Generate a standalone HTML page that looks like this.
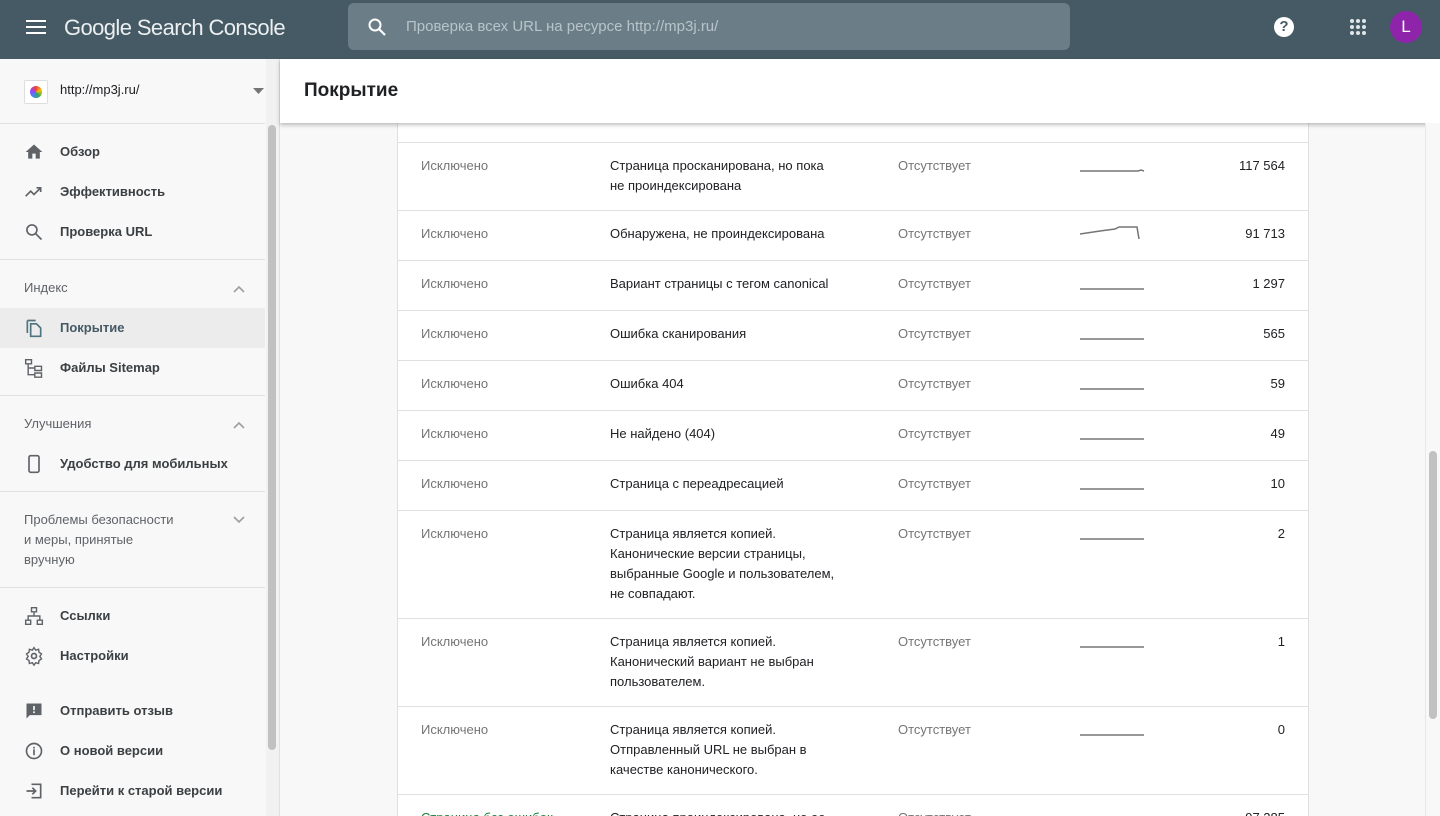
<!DOCTYPE html>
<html style="overflow:hidden;height:816px"><head><meta charset="utf-8"><style>
*{box-sizing:border-box;margin:0;padding:0}
body{width:1440px;height:816px;overflow:hidden;font-family:"Liberation Sans",Arial,sans-serif;background:#f8f8f8;position:relative;color:#202124}
.hdr{position:absolute;left:0;top:0;width:1440px;height:59px;background:#455a64}
.abs{position:absolute}
.side{position:absolute;left:0;top:59px;width:280px;height:757px;background:#f8f8f8;border-right:1px solid #e0e0e0;overflow:hidden}
.item{position:absolute;left:0;width:265px;height:40px;font-size:13px;font-weight:bold;color:#3c4043;line-height:40px;padding-left:60px}
.item svg{position:absolute;left:24px;top:10px}
.sec{position:absolute;left:24px;font-size:13px;color:#5f6368;line-height:20px}
.hr{position:absolute;left:0;width:265px;height:1px;background:#e0e0e0}
.card{position:absolute;left:397px;top:100px;width:912px;height:716px;overflow:hidden;background:#fff;border-left:1px solid #e0e0e0;border-right:1px solid #e0e0e0}
.row{position:absolute;left:0;width:911px;border-top:1px solid #e0e0e0;font-size:13px;line-height:20px}
.c1{position:absolute;left:23px;top:13px;color:#757575}
.c2{position:absolute;left:212px;top:13px;width:228px;color:#202124}
.c3{position:absolute;left:500px;top:13px;color:#757575}
.c4{position:absolute;right:24px;top:13px;color:#202124}
.sp{position:absolute;left:680px;top:0}
</style></head><body>
<div class="hdr">
 <svg class="abs" style="left:26px;top:19px" width="20" height="16"><rect x="0" y="1" width="20" height="2" fill="#fff"/><rect x="0" y="7" width="20" height="2" fill="#fff"/><rect x="0" y="13" width="20" height="2" fill="#fff"/></svg>
 <div class="abs" style="left:64px;top:13px;font-size:22px;color:#eceff1;letter-spacing:-0.6px;line-height:30px">Google Search Console</div>
 <div class="abs" style="left:348px;top:3px;width:722px;height:47px;background:#6b7e87;border-radius:6px">
  <svg class="abs" style="left:19px;top:14px" width="20" height="20" viewBox="0 0 20 20"><circle cx="8" cy="8" r="5.5" fill="none" stroke="#fff" stroke-width="2"/><path d="M12 12l6 6" stroke="#fff" stroke-width="2.2"/></svg>
  <div class="abs" style="left:58px;top:14px;font-size:15px;color:#b8c4c9;line-height:20px">Проверка всех URL на ресурсе http://mp3j.ru/</div>
 </div>
 <div class="abs" style="left:1274px;top:17px;width:20px;height:20px;border-radius:50%;background:#fff;color:#455a64;font-weight:bold;font-size:15px;text-align:center;line-height:20px">?</div>
 <svg class="abs" style="left:1350px;top:19px" width="16" height="16"><g fill="#e0e6e9"><circle cx="2" cy="2" r="2"/><circle cx="8" cy="2" r="2"/><circle cx="14" cy="2" r="2"/><circle cx="2" cy="8" r="2"/><circle cx="8" cy="8" r="2"/><circle cx="14" cy="8" r="2"/><circle cx="2" cy="14" r="2"/><circle cx="8" cy="14" r="2"/><circle cx="14" cy="14" r="2"/></g></svg>
 <div class="abs" style="left:1390px;top:11px;width:32px;height:32px;border-radius:50%;background:#8e24aa;color:#fff;font-size:17px;text-align:center;line-height:32px">L</div>
</div>

<div class="side">
 <div class="abs" style="left:24px;top:21px;width:24px;height:24px;border:1px solid #ddd;background:#fff;border-radius:2px"><div style="margin:5px;width:12px;height:12px;border-radius:50%;background:conic-gradient(#ea4335,#fbbc05,#34a853,#4285f4,#a142f4,#ea4335)"></div></div>
 <div class="abs" style="left:60px;top:21px;font-size:13px;line-height:20px">http://mp3j.ru/</div>
 <svg class="abs" style="left:253px;top:29px" width="11" height="6"><path d="M0 0h11L5.5 6z" fill="#757575"/></svg>
 <div class="hr" style="top:64px"></div>
 <div class="item" style="top:73px"><svg width="20" height="20" viewBox="0 0 24 24"><path d="M10 20v-6h4v6h5v-8h3L12 3 2 12h3v8z" fill="#5f6368"/></svg>Обзор</div>
 <div class="item" style="top:113px"><svg width="20" height="20" viewBox="0 0 24 24"><path d="M2 17l6-6 4 4 8-8M15 7h5v5" fill="none" stroke="#5f6368" stroke-width="2"/></svg>Эффективность</div>
 <div class="item" style="top:153px"><svg width="20" height="20" viewBox="0 0 24 24"><circle cx="9.5" cy="9.5" r="6" fill="none" stroke="#5f6368" stroke-width="2"/><path d="M14 14l7 7" stroke="#5f6368" stroke-width="2"/></svg>Проверка URL</div>
 <div class="hr" style="top:200px"></div>
 <div class="sec" style="top:219px">Индекс</div>
 <svg class="abs" style="left:233px;top:226px" width="12" height="8"><path d="M1 7l5-5 5 5" fill="none" stroke="#9e9e9e" stroke-width="1.6"/></svg>
 <div class="item" style="top:249px;background:#ececec;color:#455a64"><svg width="20" height="20" viewBox="0 0 24 24"><path d="M4 3v15M4 3h10M8 7h7l5 5v10H8z" fill="none" stroke="#4f7380" stroke-width="2"/></svg>Покрытие</div>
 <div class="item" style="top:289px"><svg width="20" height="20" viewBox="0 0 24 24"><path d="M2 2h7v5H2zM13 10h8v5h-8zM13 18h8v5h-8zM5 7v13h8M5 12h8" fill="none" stroke="#5f6368" stroke-width="1.7"/></svg>Файлы Sitemap</div>
 <div class="hr" style="top:336px"></div>
 <div class="sec" style="top:355px">Улучшения</div>
 <svg class="abs" style="left:233px;top:362px" width="12" height="8"><path d="M1 7l5-5 5 5" fill="none" stroke="#9e9e9e" stroke-width="1.6"/></svg>
 <div class="item" style="top:385px"><svg width="20" height="20" viewBox="0 0 24 24"><rect x="6" y="2" width="12" height="20" rx="2" fill="none" stroke="#5f6368" stroke-width="2"/></svg>Удобство для мобильных</div>
 <div class="hr" style="top:432px"></div>
 <div class="sec" style="top:451px">Проблемы безопасности<br>и меры, принятые<br>вручную</div>
 <svg class="abs" style="left:233px;top:457px" width="12" height="8"><path d="M1 1l5 5 5-5" fill="none" stroke="#9e9e9e" stroke-width="1.6"/></svg>
 <div class="hr" style="top:528px"></div>
 <div class="item" style="top:537px"><svg width="20" height="20" viewBox="0 0 24 24"><path d="M9 2h6v5H9zM2 17h6v5H2zM16 17h6v5h-6zM12 7v5M5 17v-5h14v5" fill="none" stroke="#5f6368" stroke-width="1.7"/></svg>Ссылки</div>
 <div class="item" style="top:577px"><svg width="20" height="20" viewBox="0 0 24 24"><circle cx="12" cy="12" r="3" fill="none" stroke="#5f6368" stroke-width="2"/><path d="M12 2l2 3 3.5-1 .5 3.5 3 2-2 3 2 3-3 2-.5 3.5-3.5-1-2 3-2-3-3.5 1-.5-3.5-3-2 2-3-2-3 3-2 .5-3.5 3.5 1z" fill="none" stroke="#5f6368" stroke-width="1.7"/></svg>Настройки</div>
 <div class="item" style="top:632px"><svg width="20" height="20" viewBox="0 0 24 24"><path d="M3 3h18v14H7l-4 4z" fill="#5f6368"/><rect x="11" y="6" width="2" height="5" fill="#f8f8f8"/><rect x="11" y="12.5" width="2" height="2" fill="#f8f8f8"/></svg>Отправить отзыв</div>
 <div class="item" style="top:672px"><svg width="20" height="20" viewBox="0 0 24 24"><circle cx="12" cy="12" r="9" fill="none" stroke="#5f6368" stroke-width="2"/><rect x="11" y="10" width="2" height="7" fill="#5f6368"/><rect x="11" y="7" width="2" height="2" fill="#5f6368"/></svg>О новой версии</div>
 <div class="item" style="top:712px"><svg width="20" height="20" viewBox="0 0 24 24"><path d="M9 4h11v16H9M3 12h11M10 8l4 4-4 4" fill="none" stroke="#5f6368" stroke-width="2"/></svg>Перейти к старой версии</div>
 <div class="abs" style="left:266px;top:0;width:13px;height:757px;background:#f1f1f1"></div>
 <div class="abs" style="left:268px;top:66px;width:8px;height:625px;background:#c1c1c1;border-radius:4px"></div>
</div>

<div class="card">
 <div class="row" style="top:42px;height:68px"><div class="c1">Исключено</div><div class="c2">Страница просканирована, но пока не проиндексирована</div><div class="c3">Отсутствует</div><svg class="sp" width="70" height="60"><path d="M2 28H60l3-1 3 1" fill="none" stroke="#757575" stroke-width="1.5"/></svg><div class="c4">117 564</div></div>
 <div class="row" style="top:110px;height:50px"><div class="c1">Исключено</div><div class="c2">Обнаружена, не проиндексирована</div><div class="c3">Отсутствует</div><svg class="sp" width="70" height="60"><path d="M2 23l20-3 15-2 4-2h18l2 12" fill="none" stroke="#757575" stroke-width="1.5"/></svg><div class="c4">91 713</div></div>
 <div class="row" style="top:160px;height:50px"><div class="c1">Исключено</div><div class="c2">Вариант страницы с тегом canonical</div><div class="c3">Отсутствует</div><svg class="sp" width="70" height="60"><path d="M2 28H66" stroke="#757575" stroke-width="1.5"/></svg><div class="c4">1 297</div></div>
 <div class="row" style="top:210px;height:50px"><div class="c1">Исключено</div><div class="c2">Ошибка сканирования</div><div class="c3">Отсутствует</div><svg class="sp" width="70" height="60"><path d="M2 28H66" stroke="#757575" stroke-width="1.5"/></svg><div class="c4">565</div></div>
 <div class="row" style="top:260px;height:50px"><div class="c1">Исключено</div><div class="c2">Ошибка 404</div><div class="c3">Отсутствует</div><svg class="sp" width="70" height="60"><path d="M2 28H66" stroke="#757575" stroke-width="1.5"/></svg><div class="c4">59</div></div>
 <div class="row" style="top:310px;height:50px"><div class="c1">Исключено</div><div class="c2">Не найдено (404)</div><div class="c3">Отсутствует</div><svg class="sp" width="70" height="60"><path d="M2 28H66" stroke="#757575" stroke-width="1.5"/></svg><div class="c4">49</div></div>
 <div class="row" style="top:360px;height:50px"><div class="c1">Исключено</div><div class="c2">Страница с переадресацией</div><div class="c3">Отсутствует</div><svg class="sp" width="70" height="60"><path d="M2 28H66" stroke="#757575" stroke-width="1.5"/></svg><div class="c4">10</div></div>
 <div class="row" style="top:410px;height:108px"><div class="c1">Исключено</div><div class="c2">Страница является копией. Канонические версии страницы, выбранные Google и пользователем, не совпадают.</div><div class="c3">Отсутствует</div><svg class="sp" width="70" height="60"><path d="M2 28H66" stroke="#757575" stroke-width="1.5"/></svg><div class="c4">2</div></div>
 <div class="row" style="top:518px;height:88px"><div class="c1">Исключено</div><div class="c2">Страница является копией. Канонический вариант не выбран пользователем.</div><div class="c3">Отсутствует</div><svg class="sp" width="70" height="60"><path d="M2 28H66" stroke="#757575" stroke-width="1.5"/></svg><div class="c4">1</div></div>
 <div class="row" style="top:606px;height:88px"><div class="c1">Исключено</div><div class="c2">Страница является копией. Отправленный URL не выбран в качестве канонического.</div><div class="c3">Отсутствует</div><svg class="sp" width="70" height="60"><path d="M2 28H66" stroke="#757575" stroke-width="1.5"/></svg><div class="c4">0</div></div>
 <div class="row" style="top:694px;height:60px"><div class="c1" style="color:#188038">Страница без ошибок</div><div class="c2">Страница проиндексирована, но ее</div><div class="c3">Отсутствует</div><div class="c4">97 285</div></div>
</div>

<div class="abs" style="left:280px;top:59px;width:1160px;height:64px;background:#fff;box-shadow:0 2px 4px rgba(0,0,0,.25)">
 <div class="abs" style="left:24px;top:20px;font-size:19px;font-weight:bold;color:#202124;line-height:24px">Покрытие</div>
</div>
<div class="abs" style="left:1425px;top:123px;width:15px;height:693px;background:#f8f8f8;border-left:1px solid #e8e8e8"></div>
<div class="abs" style="left:1429px;top:451px;width:8px;height:268px;background:#c1c1c1;border-radius:4px"></div>
</body></html>
